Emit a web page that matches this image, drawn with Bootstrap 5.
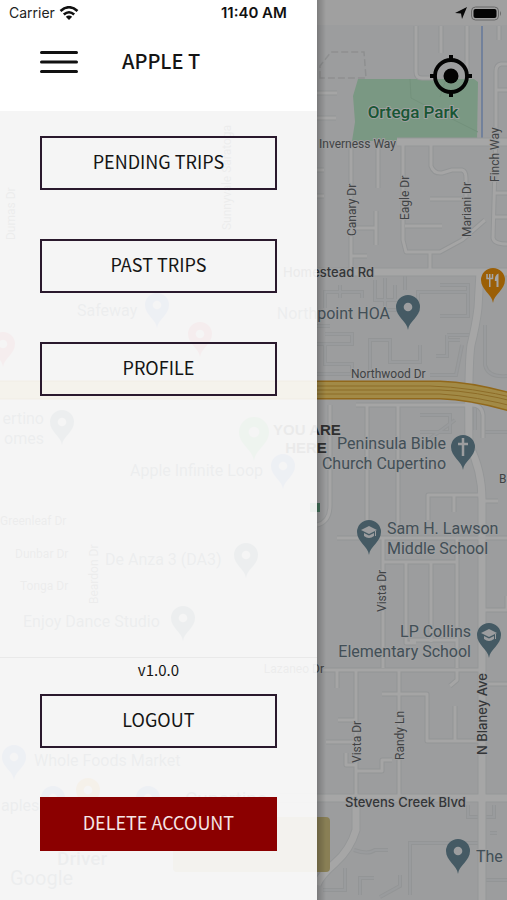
<!DOCTYPE html>
<html lang="en">
<head>
<meta charset="utf-8">
<meta name="viewport" content="width=device-width, initial-scale=1">
<title>Trips menu</title>
<link href="https://cdn.jsdelivr.net/npm/bootstrap@5.3.0/dist/css/bootstrap.min.css" rel="stylesheet">
<style>
  body { font-family: "Noto Sans CJK SC", "Noto Sans", sans-serif; color: #141414; }
  .map-canvas { z-index: 0; font-family: Roboto, "Liberation Sans", sans-serif; background: #f0f2f3; }
  .drawer { width: 62.5%; z-index: 1; }
  .drawer-top { background: #fff; height: 111px; }
  .drawer-body { background: rgba(244, 244, 244, .94); padding: 25px 40px 49px; }
  .status { height: 25px; font-family: Inter, "Liberation Sans", sans-serif; font-size: 14px; line-height: 26px; }
  .status-left { padding: 0 30px 0 9px; color: #222; }
  .clock { font-size: 15px; color: #111; }
  .status-right { background: #f6f6f6; padding-right: 5px; }
  .title-row { height: 73px; padding-left: 40px; gap: 44px; }
  .title-row h1 { font-size: 20px; line-height: 24px; font-weight: 500; padding-bottom: 2px; }
  .menu-list { gap: 49px; }
  .menu-btn { height: 54px; border: 2px solid #2a192d; border-radius: 0; font-size: 18px; line-height: 24px; padding: 0 0 4px; color: #141414; }
  .menu-btn:hover { background: #e9e6ea; color: #141414; border-color: #2a192d; }
  .delete-btn, .delete-btn:hover { background: #8b0000; border-color: #8b0000; color: #f5e6e6; }
  .foot { margin: 0 -40px; padding: 0 40px; border-top: 1px solid #e9e9e9; }
  .version { font-size: 15px; line-height: 24px; margin-bottom: 12px; }
  .scrim { position: relative; z-index: 1; }
  .shade { background: linear-gradient(90deg, rgba(0,0,0,.22), transparent 9px), rgba(0, 0, 0, .35); pointer-events: none; }
  .locate { margin: 30px 35px 0 0; line-height: 0; }
  .poi { font-size: 16px; fill: #667a86; }
  .street { font-size: 12px; fill: #64686b; }
  .avenue { font-family: Inter, "Liberation Sans", sans-serif; font-size: 13px; fill: #505356; font-weight: 500; }
  .map-canvas text { paint-order: stroke; stroke: #f4f5f6; stroke-width: 2px; stroke-linejoin: round; }
</style>
<script src="https://cdn.jsdelivr.net/npm/bootstrap@5.3.0/dist/js/bootstrap.bundle.min.js"></script>
</head>
<body>
<div class="d-flex min-vh-100 position-relative overflow-hidden">

  <svg class="map-canvas position-absolute top-0 start-0 w-100 h-100" viewBox="0 0 507 900" preserveAspectRatio="xMidYMid slice" role="img" aria-label="Map of Cupertino">
    <defs>
      <path id="pin" d="M0 23C-1 14-12 10-12 0A12 12 0 1 1 12 0C12 10 1 14 0 23Z"/>
      <g id="dotpin"><use href="#pin"/><circle r="4.3" fill="#f0f2f4"/></g>
      <g id="schoolpin"><use href="#pin"/><path d="M-8-2L0-6L8-2L0 2ZM-5 1V4Q0 8 5 4V1L0 3.500ZM6-1H7V4H6Z" fill="#f0f2f4"/></g>
      <g id="roads" fill="none" stroke-linejoin="round">
        <path d="M416 26V72Q416 78 422 78H436M467 26V80M441 26V53M499 26V40M507 64H501Q496 65 496 71V130L493 238Q494 244 507 244M496 90H507M493 193H507M493 217H507"/>
        <path d="M317 93H337M317 118H336M317 170H324M317 196H324M351 143V270M351 228H377M378 143V188M376 211V245M403 143V240L406 252H440L462 240L485 220M405 226H442M431 143V166Q434 174 442 173L452 170H462Q466 171 466 178V238M430 252V270M430 199H462M351 256H367"/>
        <path d="M356 405H472Q482 405 483 415V438M367 405V530M398 405V535M317 525Q330 522 330 505V405"/>
        <path d="M337 538H507M383 538V668M428 520V495H480M454 496V512M480 501H498M384 562H458M406 563V643L416 643M431 563V642M457 538V668M410 640H456M484 610H507V596"/>
        <path d="M317 670H482M356 670V795M337 670V688M399 670V795M382 694H427V741H482M455 706V741M482 684H507M326 742H356M346 753V765H356V771H382V760H392M338 720H356M457 670V680L450 686"/>
      </g>
      <g id="mainroads" fill="none">
        <path d="M397 142H507M317 272H507"/>
        <path d="M480 272L478 308Q476 325 471 345Q468 365 469 445Q482 470 482 500V900"/>
        <path d="M200 798H507M356 800V830Q350 850 335 863T317 885"/>
      </g>
      <g id="lots" fill="none">
        <path d="M325 308V292H362V298M375 280V300H397M385 278V310H418V292H468M405 275V290M440 285H468V316H440M325 334H352V344H325V364H352V374H317M370 375V340H390V362H420V345M447 335H472M447 335V356H436M462 345L456 375H430M485 325V365Q488 378 507 376M317 326H330M420 415H450V432H420M428 440L455 420M475 405V430M485 432H507M317 344H325M460 340H448M395 300V285M340 298V285"/>
        <path d="M354 850Q368 855 375 850H388M468 805V817H494V805M484 880H507M410 895V843H478M360 895V878H374M380 897L400 886V875M323 890H345V868M490 833H497"/>
      </g>
    </defs>

    <path d="M358 79H474L478 82L477 141H352L355 122L353 96Z" fill="#bceac9"/>
    <path d="M410 79L411 98L442 114L478 132M446 79L440 97" fill="none" stroke="#b1dfbf"/>
    <path d="M482 26V140" stroke="#9ab7ee" stroke-width="1.500"/>
    <path d="M320 78V66L331 52H364L366 78Z" fill="none" stroke="#dadcdd" stroke-width="1.500" stroke-dasharray="7 3"/>
    <use href="#lots" stroke="#e2e5e7" stroke-width="4"/>
    <use href="#lots" stroke="#eceef1" stroke-width="2"/>
    <use href="#roads" stroke="#e2e5e7" stroke-width="5"/>
    <use href="#mainroads" stroke="#e5e8ea" stroke-width="9"/>
    <use href="#roads" stroke="#fdfdfd" stroke-width="3"/>
    <use href="#mainroads" stroke="#ffffff" stroke-width="7"/>
    <rect x="173" y="817" width="157" height="55" rx="4" fill="#d3c483"/>
    <rect x="310" y="503" width="10" height="9" fill="#68b08c"/>

    <g fill="none">
      <path d="M0 390H440Q475 391 520 405" stroke="#dfa02a" stroke-width="19"/>
      <path d="M0 390H440Q475 391 520 405" stroke="#f9d56c" stroke-width="16"/>
      <path d="M317 386H430Q470 387 520 399M317 394H440Q475 396 520 408M317 390H440Q475 391 520 403" stroke="#d9a63c"/>
    </g>

    <g fill="#6a8b9a">
      <use href="#dotpin" x="408" y="307"/><use href="#dotpin" x="458" y="851"/>
      <use href="#dotpin" x="62" y="422"/><use href="#dotpin" x="246" y="555"/>
      <use href="#dotpin" x="183" y="618"/><use href="#schoolpin" x="369" y="532"/>
      <use href="#schoolpin" x="489" y="635"/><use href="#pin" x="463" y="447"/>
    </g>
    <path d="M463 438V456M458 444H468" stroke="#f0f2f4" stroke-width="2.500"/>
    <use href="#pin" x="493" y="280" fill="#ef930a"/>
    <path d="M487 274V278.500H492.500V274M489.750 274V287" fill="none" stroke="#fff" stroke-width="1.500"/>
    <path d="M498.500 273.500V287H496.500V281H494.800Q494.500 275 498.500 273.500Z" fill="#fff"/>
    <g fill="#7da0ee">
      <use href="#dotpin" x="157" y="305"/><use href="#dotpin" x="283" y="466"/>
      <use href="#dotpin" x="14" y="757"/><use href="#dotpin" x="53" y="798"/><use href="#dotpin" x="148" y="798"/>
    </g>
    <g fill="#f0788a"><use href="#dotpin" x="200" y="334"/><use href="#dotpin" x="3" y="344"/></g>
    <use href="#dotpin" x="88" y="790" fill="#f8b84c"/>
    <use href="#dotpin" transform="translate(254 432) scale(1.250)" fill="#8be09a"/>

    <g class="poi">
      <text x="390" y="319" text-anchor="end">Northpoint HOA</text>
      <text x="446" y="449" text-anchor="end">Peninsula Bible</text>
      <text x="446" y="469" text-anchor="end">Church Cupertino</text>
      <text x="387" y="534">Sam H. Lawson</text>
      <text x="387" y="554">Middle School</text>
      <text x="471" y="637" text-anchor="end">LP Collins</text>
      <text x="471" y="657" text-anchor="end">Elementary School</text>
      <text x="476" y="862">The</text>
      <text x="77" y="316">Safeway</text>
      <text x="44" y="424" text-anchor="end">ertino</text>
      <text x="44" y="444" text-anchor="end">omes</text>
      <text x="130" y="476">Apple Infinite Loop</text>
      <text x="105" y="565">De Anza 3 (DA3)</text>
      <text x="23" y="627">Enjoy Dance Studio</text>
      <text x="34" y="766">Whole Foods Market</text>
      <text x="1" y="811">aples</text>
      <text x="185" y="805" font-size="19">Cupertino</text>
      <text x="57" y="865" font-size="19" font-weight="500">Driver</text>
      <text x="10" y="885" font-size="20">Google</text>
    </g>
    <g class="street">
      <text x="319" y="148">Inverness Way</text>
      <text x="351" y="378">Northwood Dr</text>
      <text x="499" y="483">B</text>
      <text transform="translate(356 236) rotate(-90)">Canary Dr</text>
      <text transform="translate(409 220) rotate(-90)">Eagle Dr</text>
      <text transform="translate(471 237) rotate(-90)">Mariani Dr</text>
      <text transform="translate(499 182) rotate(-90)">Finch Way</text>
      <text transform="translate(386 612) rotate(-90)">Vista Dr</text>
      <text transform="translate(361 763) rotate(-90)">Vista Dr</text>
      <text transform="translate(404 760) rotate(-90)">Randy Ln</text>
      <text x="324" y="673" text-anchor="end">Lazaneo Dr</text>
      <text x="0" y="525">Greenleaf Dr</text>
      <text x="15" y="558">Dunbar Dr</text>
      <text x="20" y="590">Tonga Dr</text>
      <text transform="translate(15 240) rotate(-90)">Dumas Dr</text>
      <text transform="translate(231 230) rotate(-90)">Sunnyvale Saratoga</text>
      <text transform="translate(98 604) rotate(-90)">Beardon Dr</text>
    </g>
    <g class="avenue">
      <text x="374" y="277" text-anchor="end">Homestead Rd</text>
      <text x="345" y="807">Stevens Creek Blvd</text>
      <text transform="translate(487 755) rotate(-90)">N Blaney Ave</text>
    </g>
    <text x="413" y="118" text-anchor="middle" font-size="17" font-weight="500" fill="#278450">Ortega Park</text>
    <g font-size="15" font-weight="600" fill="#4a4a4a" text-anchor="middle" font-family="Liberation Sans, sans-serif">
      <text x="307" y="435">YOU ARE</text><text x="306" y="453">HERE</text>
    </g>
  </svg>

  <aside class="drawer d-flex flex-column">
    <header class="drawer-top">
      <div class="status status-left d-flex justify-content-between">
        <span class="d-flex align-items-center gap-1">Carrier
          <svg width="20" height="14" viewBox="0 0 20 14" role="img" aria-label="Wi-Fi"><g fill="none" stroke="#111" stroke-width="2.600"><path d="M1.500 5Q10-2.500 18.500 5"/><path d="M4.800 8.500Q10 4 15.200 8.500"/></g><path d="M10 14L6.800 10.800Q10 8.300 13.200 10.800Z" fill="#111"/></svg>
        </span>
        <span class="clock fw-semibold">11:40 AM</span>
      </div>
      <div class="title-row d-flex align-items-center">
        <button type="button" class="btn border-0 p-0 lh-1" aria-label="Close menu">
          <svg class="d-block" width="38" height="24" viewBox="0 0 38 24"><path d="M1.500 2.500H36.500M1.500 12H36.500M1.500 21.500H36.500" stroke="#111" stroke-width="3" stroke-linecap="round"/></svg>
        </button>
        <h1 class="mb-0">APPLE T</h1>
      </div>
    </header>
    <div class="drawer-body flex-grow-1 d-flex flex-column justify-content-between">
      <nav class="menu-list d-grid">
        <button type="button" class="btn menu-btn">PENDING TRIPS</button>
        <button type="button" class="btn menu-btn">PAST TRIPS</button>
        <button type="button" class="btn menu-btn">PROFILE</button>
      </nav>
      <div class="foot">
        <p class="version text-center">v1.0.0</p>
        <div class="menu-list d-grid">
          <button type="button" class="btn menu-btn">LOGOUT</button>
          <button type="button" class="btn menu-btn delete-btn">DELETE ACCOUNT</button>
        </div>
      </div>
    </div>
  </aside>

  <section class="scrim flex-grow-1">
    <div class="status status-right d-flex justify-content-end align-items-center">
      <svg width="48" height="16" viewBox="0 0 48 16" role="img" aria-label="Location on, battery full"><path d="M1 8L13 2L8 14L7 8.500Z" fill="#0b0b0b"/><rect x="17.500" y="2" width="27" height="13" rx="4" fill="none" stroke="#a0a0a0"/><rect x="19.500" y="4" width="23" height="9" rx="2" fill="#050505"/><path d="M46 6V11Q48 8.500 46 6Z" fill="#a0a0a0"/></svg>
    </div>
    <div class="d-flex justify-content-end">
      <button type="button" class="btn border-0 p-0 locate" aria-label="Centre on my location">
        <svg width="42" height="42" viewBox="0 0 42 42"><g fill="none" stroke="#050505"><circle cx="21" cy="21" r="16" stroke-width="3.800"/><path d="M21 0V5M21 37V42M0 21H5M37 21H42" stroke-width="4"/></g><circle cx="21" cy="21" r="7.500" fill="#050505"/></svg>
      </button>
    </div>
    <div class="shade position-absolute top-0 start-0 w-100 h-100"></div>
  </section>
</div>
</body>
</html>
